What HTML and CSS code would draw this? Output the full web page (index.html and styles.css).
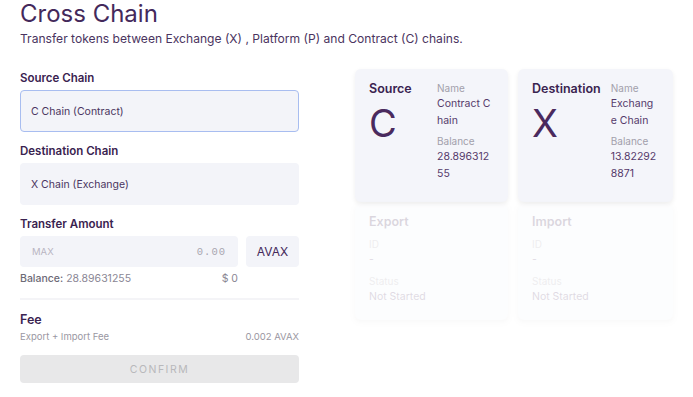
FILE: index.html
```html
<!DOCTYPE html>
<html lang="en">
<head>
  <meta charset="UTF-8">
  <title>Cross Chain</title>
  <meta name="viewport" content="width=device-width, initial-scale=1.0">
  <link rel="stylesheet" href="styles.css">
</head>
<body>
  <h1>Cross Chain</h1>
  <p class="subtitle">Transfer tokens between Exchange (X) , Platform (P) and Contract (C) chains.</p>

  <div class="layout">
    <div class="form">
      <label class="field-label">Source Chain</label>
      <div class="select focused">C Chain (Contract)</div>

      <label class="field-label">Destination Chain</label>
      <div class="select">X Chain (Exchange)</div>

      <label class="field-label">Transfer Amount</label>
      <div class="amount-row">
        <div class="amount-input">
          <span class="max">MAX</span>
          <span class="amount">0.00</span>
        </div>
        <div class="token">AVAX</div>
      </div>
      <div class="balance-row">
        <span><b>Balance:</b> 28.89631255</span>
        <span>$ 0</span>
      </div>

      <hr class="divider">

      <h3 class="fee-title">Fee</h3>
      <div class="fee-row">
        <span>Export + Import Fee</span>
        <span>0.002 AVAX</span>
      </div>

      <button class="confirm-btn" disabled>CONFIRM</button>
    </div>

    <div class="status-grid">
      <div class="card">
        <div class="card-head">
          <h4>Source</h4>
          <div class="chain-letter">C</div>
        </div>
        <div class="card-info">
          <span class="info-label">Name</span>
          <span class="info-value">Contract Chain</span>
          <span class="info-label">Balance</span>
          <span class="info-value">28.89631255</span>
        </div>
      </div>

      <div class="card">
        <div class="card-head">
          <h4>Destination</h4>
          <div class="chain-letter">X</div>
        </div>
        <div class="card-info">
          <span class="info-label">Name</span>
          <span class="info-value">Exchange Chain</span>
          <span class="info-label">Balance</span>
          <span class="info-value">13.822928871</span>
        </div>
      </div>

      <div class="card faded">
        <h4>Export</h4>
        <span class="info-label">ID</span>
        <span class="info-value">-</span>
        <span class="info-label">Status</span>
        <span class="info-value">Not Started</span>
      </div>

      <div class="card faded">
        <h4>Import</h4>
        <span class="info-label">ID</span>
        <span class="info-value">-</span>
        <span class="info-label">Status</span>
        <span class="info-value">Not Started</span>
      </div>
    </div>
  </div>
</body>
</html>
```

FILE: styles.css
```css
body {
  margin: 0;
  padding: 0 20px;
  font-family: Inter, 'Noto Sans', sans-serif;
  background-color: #ffffff;
  color: #3d2552;
}

h1 {
  margin: 0;
  padding-top: 1px;
  font-size: 24px;
  line-height: 25px;
  font-weight: 400;
  color: #44295b;
}

.subtitle {
  margin: 6px 0 0;
  font-size: 12.1px;
  line-height: 14px;
  color: #4a3460;
}

.layout {
  display: flex;
  align-items: flex-start;
  margin-top: 21px;
}

/* === Form column === */
.form {
  width: 279px;
  display: flex;
  flex-direction: column;
}

.field-label {
  display: block;
  margin: 4px 0 5px;
  font-size: 11.5px;
  line-height: 14px;
  font-weight: 600;
  color: #3a2350;
}

.select {
  height: 42px;
  box-sizing: border-box;
  padding: 0 10px;
  display: flex;
  align-items: center;
  background-color: #f3f4f9;
  border: 1px solid transparent;
  border-radius: 4px;
  font-size: 10.5px;
  color: #4a3560;
  margin-bottom: 8px;
}

.select.focused {
  border-color: #a8bdf0;
}

.amount-row {
  display: flex;
  gap: 8px;
  height: 31px;
}

.amount-input {
  flex: 1;
  display: flex;
  justify-content: space-between;
  align-items: center;
  padding: 0 12px;
  background-color: #f3f4f9;
  border-radius: 4px;
}

.max {
  font-size: 9.5px;
  color: #b9b5c2;
}

.amount {
  font-family: 'Liberation Mono', monospace;
  font-size: 10.5px;
  letter-spacing: 1px;
  color: #a9a6b0;
}

.token {
  width: 53px;
  display: flex;
  align-items: center;
  justify-content: center;
  background-color: #f3f4f9;
  border-radius: 4px;
  font-size: 12px;
  color: #44295b;
}

.balance-row {
  width: 218px;
  display: flex;
  justify-content: space-between;
  margin-top: 5px;
  font-size: 10.5px;
  line-height: 14px;
  color: #8a8694;
}

.balance-row b {
  font-weight: 500;
  color: #6d6a76;
}

.divider {
  width: 100%;
  border: none;
  border-top: 2px solid #f4f4f7;
  margin: 12px 0 12px;
}

.fee-title {
  margin: 0;
  font-size: 12.5px;
  line-height: 16px;
  font-weight: 600;
  color: #3a2350;
}

.fee-row {
  display: flex;
  justify-content: space-between;
  margin-top: 3px;
  font-size: 9.5px;
  line-height: 12px;
  color: #9a97a2;
}

.confirm-btn {
  margin-top: 12px;
  height: 28px;
  border: none;
  border-radius: 4px;
  background-color: #e8e8e9;
  color: #b8b8bb;
  font-family: inherit;
  font-size: 10.5px;
  letter-spacing: 1.5px;
  -webkit-appearance: none;
  appearance: none;
}

/* === Status cards === */
.status-grid {
  margin-left: 56px;
  margin-top: 2px;
  width: 318px;
  display: grid;
  grid-template-columns: 153px 155px;
  column-gap: 10px;
  row-gap: 2px;
}

.card {
  background-color: #f4f5fa;
  border-radius: 6px;
  box-shadow: 0 2px 5px rgba(0, 0, 0, 0.07);
  padding: 12px 16px 12px 14px;
  display: flex;
  min-height: 109px;
}

.card h4 {
  margin: 0;
  font-size: 12.5px;
  line-height: 16px;
  font-weight: 600;
  color: #3a2350;
}

.card-head {
  min-width: 58px;
  margin-right: 10px;
}

.chain-letter {
  margin-top: 6px;
  font-size: 38px;
  line-height: 40px;
  color: #4a2a5e;
}

.card-info {
  flex: 1;
  display: flex;
  flex-direction: column;
  word-break: break-all;
}

.info-label {
  font-size: 10px;
  line-height: 14px;
  color: #a29fab;
}

.info-value {
  font-size: 10.5px;
  line-height: 17px;
  color: #553a6a;
  margin-bottom: 5px;
}

.card.faded {
  flex-direction: column;
  min-height: 0;
  opacity: 0.18;
  box-shadow: 0 2px 5px rgba(0, 0, 0, 0.15);
  padding: 10px 14px 14px;
}

.card.faded h4 {
  margin-bottom: 7px;
}

.card.faded .info-value {
  line-height: 18px;
  margin-bottom: 5px;
}

.card.faded .info-value:last-child {
  margin-bottom: 0;
}
```
